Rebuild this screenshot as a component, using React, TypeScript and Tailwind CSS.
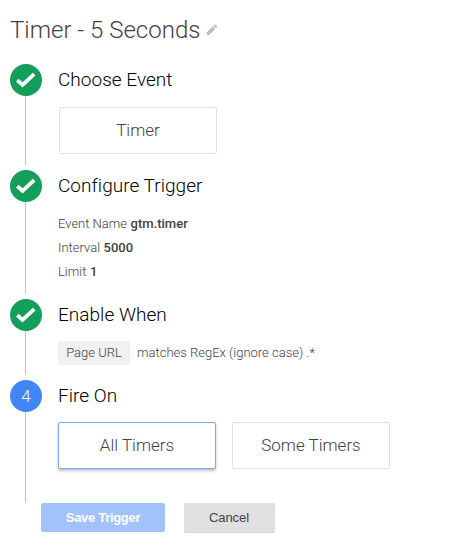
import type { ReactNode } from "react";
import clsx from "clsx";

const CONFIG = [
  { label: "Event Name", value: "gtm.timer" },
  { label: "Interval", value: "5000" },
  { label: "Limit", value: "1" },
];

function PencilIcon() {
  return (
    <svg width="12" height="12" viewBox="0 0 12 12" fill="#bdbdbd">
      <path d="M0.6 8.4 L6.6 2.4 L9.2 5 L3.2 11 H0.6 Z" />
      <path d="M7.5 1.7 L8.6 0.7 Q9 0.4 9.5 0.7 L11 2.2 Q11.3 2.6 11 3.1 L10 4.2 Z" />
    </svg>
  );
}

function CheckIcon() {
  return (
    <svg width="32" height="32" viewBox="0 0 32 32" fill="none">
      <path
        d="M7.3 16.2 L12.5 20.9 L24.2 10.2"
        stroke="#fff"
        strokeWidth="3.8"
      />
    </svg>
  );
}

interface StepProps {
  title: string;
  number?: number;
  className: string;
  last?: boolean;
  children: ReactNode;
}

function Step({ title, number, className, last, children }: StepProps) {
  return (
    <section className={clsx("flex", className)}>
      <div className="flex w-8 shrink-0 flex-col">
        <div
          className={clsx(
            "flex size-8 shrink-0 items-center justify-center rounded-full text-[17px] font-light text-white",
            number ? "bg-[#4285f4] pt-0.5" : "bg-[#139f5b]",
          )}
        >
          {number ? number : <CheckIcon />}
        </div>
        <div
          className={clsx("ml-[15px] w-px grow bg-[#c4c4c4]", !last && "mb-[5px]")}
        />
      </div>
      <div className="ml-4">
        <h2 className="h-8 text-[19px] leading-[31px] font-light tracking-[0.03px] whitespace-nowrap text-black">
          {title}
        </h2>
        {children}
      </div>
    </section>
  );
}

function OptionCard({
  label,
  selected,
}: {
  label: string;
  selected?: boolean;
}) {
  return (
    <button
      className={clsx(
        "h-[47px] w-[158px] rounded-[2px] border bg-white text-[17px] font-light",
        selected
          ? "border-[#7baaf7] shadow-[0_2px_3px_rgba(0,0,0,0.25)]"
          : "border-[#e0e0e0]",
      )}
    >
      {label}
    </button>
  );
}

export default function App() {
  return (
    <main className="h-[550px] w-[473px] overflow-hidden bg-white pl-2.5 font-[Roboto,sans-serif] text-[#424242]">
      <header className="flex h-16 items-center gap-1.5 pb-1">
        <h1 className="text-[24px] leading-8 font-light">Timer - 5 Seconds</h1>
        <PencilIcon />
      </header>

      <Step title="Choose Event" className="h-[106px]">
        <div className="mt-[11px] ml-px">
          <OptionCard label="Timer" />
        </div>
      </Step>

      <Step title="Configure Trigger" className="h-[129px]">
        <dl className="mt-[10px] text-[13px] leading-6 font-light">
          {CONFIG.map((item) => (
            <div key={item.label} className="flex gap-[3.5px]">
              <dt>{item.label}</dt>
              <dd className="font-medium">{item.value}</dd>
            </div>
          ))}
        </dl>
      </Step>

      <Step title="Enable When" className="h-[81px]">
        <div className="mt-[10px] flex h-6 items-center text-[13px] font-light">
          <span className="w-[72px] rounded-[2px] bg-[#f1f1f1] text-center leading-6">
            Page URL
          </span>
          <span className="ml-[7px]">matches RegEx (ignore case) .*</span>
        </div>
      </Step>

      <Step title="Fire On" number={4} className="h-[123px]" last>
        <div className="mt-[10px] flex gap-4">
          <OptionCard label="All Timers" selected />
          <OptionCard label="Some Timers" />
        </div>
      </Step>

      <footer className="ml-[31px] flex items-start gap-[19px] font-['Liberation_Sans',Arial,sans-serif] text-[13px]">
        <button className="h-[29px] w-[124px] rounded-[2px] bg-[#a1c2fa] font-bold tracking-[-0.3px] text-white">
          Save Trigger
        </button>
        <button className="h-[29px] w-[91px] rounded-[2px] bg-[#e0e0e0] pr-px tracking-[-0.1px] shadow-[0_1px_0_#d4d4d4]">
          Cancel
        </button>
      </footer>
    </main>
  );
}
